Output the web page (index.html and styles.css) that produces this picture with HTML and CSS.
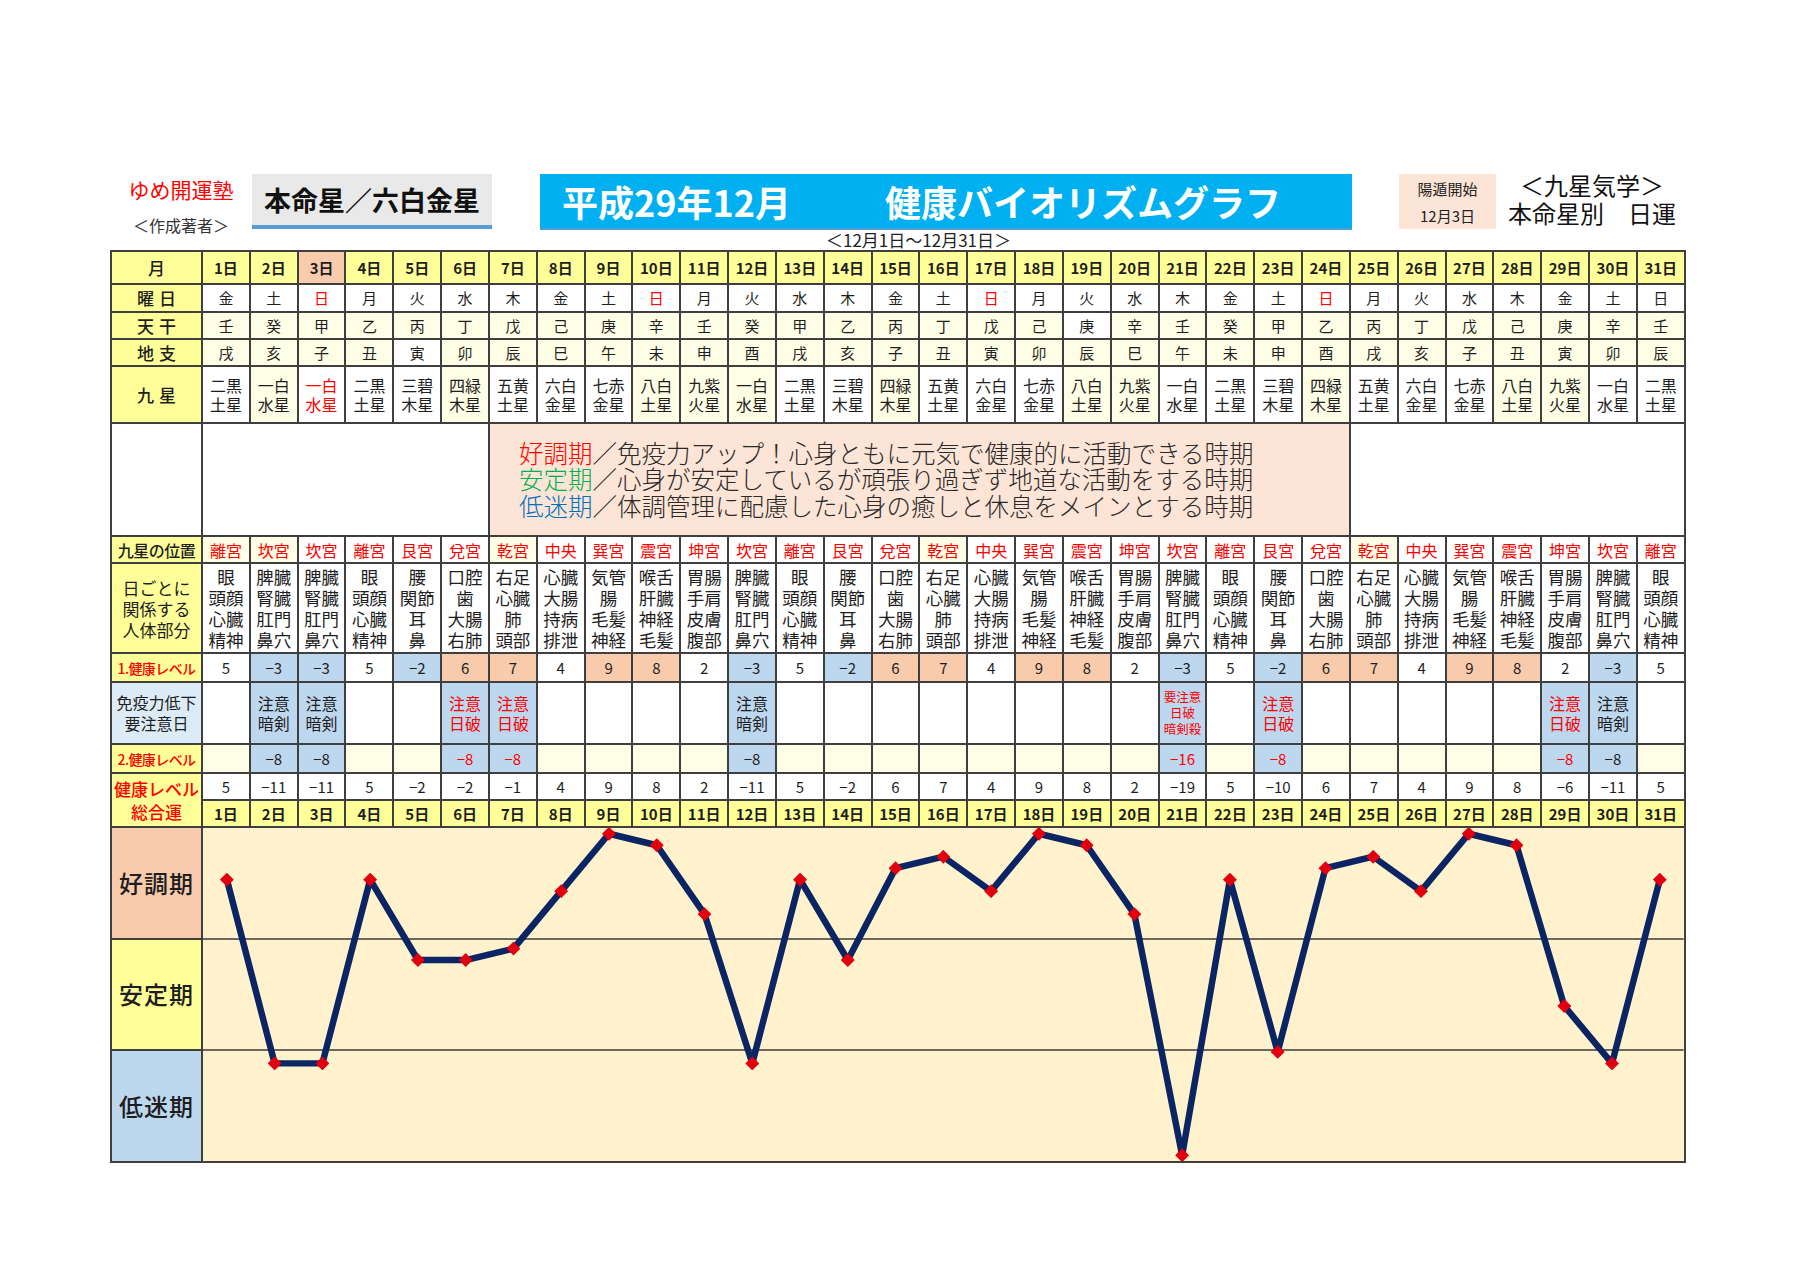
FILE: index.html
```html
<!DOCTYPE html>
<html lang="ja">
<head>
<meta charset="utf-8">
<title>健康バイオリズムグラフ</title>
<link rel="stylesheet" href="styles.css">
</head>
<body>
<div class="page">
  <div class="header">
    <div class="brand">
      <div class="brand-name">ゆめ開運塾</div>
      <div class="brand-sub">＜作成著者＞</div>
    </div>
    <div class="honmei">本命星／六白金星</div>
    <div class="banner"><span>平成29年12月</span><span class="title2">健康バイオリズムグラフ</span></div>
    <div class="start"><span>陽遁開始</span><span>12月3日</span></div>
    <div class="kisei"><span>＜九星気学＞</span><span>本命星別　日運</span></div>
  </div>
  <div class="period">＜12月1日～12月31日＞</div>

  <table class="grid">
    <colgroup>
      <col class="c-lab">
      <col span="31" class="c-day">
    </colgroup>
    <tr class="r-month">
      <th class="lab sp">月</th>
      <td class="day">1日</td><td class="day">2日</td><td class="day pk">3日</td><td class="day">4日</td><td class="day">5日</td><td class="day">6日</td><td class="day">7日</td><td class="day">8日</td><td class="day">9日</td><td class="day">10日</td><td class="day">11日</td><td class="day">12日</td><td class="day">13日</td><td class="day">14日</td><td class="day">15日</td><td class="day">16日</td><td class="day">17日</td><td class="day">18日</td><td class="day">19日</td><td class="day">20日</td><td class="day">21日</td><td class="day">22日</td><td class="day">23日</td><td class="day">24日</td><td class="day">25日</td><td class="day">26日</td><td class="day">27日</td><td class="day">28日</td><td class="day">29日</td><td class="day">30日</td><td class="day">31日</td>
    </tr>
    <tr class="r-small">
      <th class="lab sp">曜日</th>
      <td>金</td><td>土</td><td class="red">日</td><td>月</td><td>火</td><td>水</td><td>木</td><td>金</td><td>土</td><td class="red">日</td><td>月</td><td>火</td><td>水</td><td>木</td><td>金</td><td>土</td><td class="red">日</td><td>月</td><td>火</td><td>水</td><td>木</td><td>金</td><td>土</td><td class="red">日</td><td>月</td><td>火</td><td>水</td><td>木</td><td>金</td><td>土</td><td>日</td>
    </tr>
    <tr class="r-small2">
      <th class="lab sp">天干</th>
      <td class="ly">壬</td><td class="ly">癸</td><td class="ly">甲</td><td class="ly">乙</td><td class="ly">丙</td><td class="ly">丁</td><td class="ly">戊</td><td class="ly">己</td><td class="ly">庚</td><td class="ly">辛</td><td class="ly">壬</td><td class="ly">癸</td><td class="ly">甲</td><td class="ly">乙</td><td class="ly">丙</td><td class="ly">丁</td><td class="ly">戊</td><td class="ly">己</td><td>庚</td><td class="ly">辛</td><td class="ly">壬</td><td class="ly">癸</td><td class="ly">甲</td><td class="ly">乙</td><td class="ly">丙</td><td class="ly">丁</td><td class="ly">戊</td><td class="ly">己</td><td class="ly">庚</td><td class="ly">辛</td><td class="ly">壬</td>
    </tr>
    <tr class="r-small3">
      <th class="lab sp">地支</th>
      <td class="ly">戌</td><td class="ly">亥</td><td class="ly">子</td><td class="ly">丑</td><td>寅</td><td class="ly">卯</td><td class="ly">辰</td><td class="ly">巳</td><td class="ly">午</td><td class="ly">未</td><td class="ly">申</td><td class="ly">酉</td><td class="ly">戌</td><td class="ly">亥</td><td class="ly">子</td><td class="ly">丑</td><td class="ly">寅</td><td class="ly">卯</td><td class="ly">辰</td><td class="ly">巳</td><td class="ly">午</td><td class="ly">未</td><td class="ly">申</td><td class="ly">酉</td><td class="ly">戌</td><td class="ly">亥</td><td class="ly">子</td><td class="ly">丑</td><td class="ly">寅</td><td class="ly">卯</td><td class="ly">辰</td>
    </tr>
    <tr class="r-star">
      <th class="lab sp">九星</th>
      <td>二黒<br>土星</td><td class="ly">一白<br>水星</td><td class="red">一白<br>水星</td><td>二黒<br>土星</td><td>三碧<br>木星</td><td class="ly">四緑<br>木星</td><td>五黄<br>土星</td><td>六白<br>金星</td><td>七赤<br>金星</td><td class="ly">八白<br>土星</td><td class="ly">九紫<br>火星</td><td class="ly">一白<br>水星</td><td>二黒<br>土星</td><td>三碧<br>木星</td><td class="ly">四緑<br>木星</td><td>五黄<br>土星</td><td>六白<br>金星</td><td>七赤<br>金星</td><td class="ly">八白<br>土星</td><td class="ly">九紫<br>火星</td><td>一白<br>水星</td><td>二黒<br>土星</td><td>三碧<br>木星</td><td class="ly">四緑<br>木星</td><td>五黄<br>土星</td><td>六白<br>金星</td><td>七赤<br>金星</td><td class="ly">八白<br>土星</td><td class="ly">九紫<br>火星</td><td>一白<br>水星</td><td>二黒<br>土星</td>
    </tr>
    <tr class="r-legend">
      <th class="lab white"></th>
      <td colspan="6"></td>
      <td colspan="18" class="legend">
        <div class="legend-lines">
          <div><span class="k-good">好調期</span>／免疫力アップ！心身ともに元気で健康的に活動できる時期</div>
          <div><span class="k-stable">安定期</span>／心身が安定しているが頑張り過ぎず地道な活動をする時期</div>
          <div><span class="k-low">低迷期</span>／体調管理に配慮した心身の癒しと休息をメインとする時期</div>
        </div>
      </td>
      <td colspan="7"></td>
    </tr>
    <tr class="r-palace">
      <th class="lab lab-palace">九星の位置</th>
      <td class="ly">離宮</td><td class="ly">坎宮</td><td>坎宮</td><td>離宮</td><td>艮宮</td><td>兌宮</td><td class="ly">乾宮</td><td>中央</td><td>巽宮</td><td>震宮</td><td>坤宮</td><td>坎宮</td><td>離宮</td><td>艮宮</td><td>兌宮</td><td class="ly">乾宮</td><td>中央</td><td>巽宮</td><td>震宮</td><td>坤宮</td><td>坎宮</td><td>離宮</td><td>艮宮</td><td>兌宮</td><td class="ly">乾宮</td><td>中央</td><td>巽宮</td><td>震宮</td><td>坤宮</td><td>坎宮</td><td>離宮</td>
    </tr>
    <tr class="r-body">
      <th class="lab lab-body">日ごとに<br>関係する<br>人体部分</th>
      <td>眼<br>頭顔<br>心臓<br>精神</td>
      <td>脾臓<br>腎臓<br>肛門<br>鼻穴</td>
      <td>脾臓<br>腎臓<br>肛門<br>鼻穴</td>
      <td>眼<br>頭顔<br>心臓<br>精神</td>
      <td>腰<br>関節<br>耳<br>鼻</td>
      <td>口腔<br>歯<br>大腸<br>右肺</td>
      <td>右足<br>心臓<br>肺<br>頭部</td>
      <td>心臓<br>大腸<br>持病<br>排泄</td>
      <td>気管<br>腸<br>毛髪<br>神経</td>
      <td>喉舌<br>肝臓<br>神経<br>毛髪</td>
      <td>胃腸<br>手肩<br>皮膚<br>腹部</td>
      <td>脾臓<br>腎臓<br>肛門<br>鼻穴</td>
      <td>眼<br>頭顔<br>心臓<br>精神</td>
      <td>腰<br>関節<br>耳<br>鼻</td>
      <td>口腔<br>歯<br>大腸<br>右肺</td>
      <td>右足<br>心臓<br>肺<br>頭部</td>
      <td>心臓<br>大腸<br>持病<br>排泄</td>
      <td>気管<br>腸<br>毛髪<br>神経</td>
      <td>喉舌<br>肝臓<br>神経<br>毛髪</td>
      <td>胃腸<br>手肩<br>皮膚<br>腹部</td>
      <td>脾臓<br>腎臓<br>肛門<br>鼻穴</td>
      <td>眼<br>頭顔<br>心臓<br>精神</td>
      <td>腰<br>関節<br>耳<br>鼻</td>
      <td>口腔<br>歯<br>大腸<br>右肺</td>
      <td>右足<br>心臓<br>肺<br>頭部</td>
      <td>心臓<br>大腸<br>持病<br>排泄</td>
      <td>気管<br>腸<br>毛髪<br>神経</td>
      <td>喉舌<br>肝臓<br>神経<br>毛髪</td>
      <td>胃腸<br>手肩<br>皮膚<br>腹部</td>
      <td>脾臓<br>腎臓<br>肛門<br>鼻穴</td>
      <td>眼<br>頭顔<br>心臓<br>精神</td>
    </tr>
    <tr class="r-level">
      <th class="lab lab-level">1.健康レベル</th>
      <td>5</td><td class="bl">−3</td><td class="bl">−3</td><td>5</td><td class="bl">−2</td><td class="pk">6</td><td class="pk">7</td><td>4</td><td class="pk">9</td><td class="pk">8</td><td>2</td><td class="bl">−3</td><td>5</td><td class="bl">−2</td><td class="pk">6</td><td class="pk">7</td><td>4</td><td class="pk">9</td><td class="pk">8</td><td>2</td><td class="bl">−3</td><td>5</td><td class="bl">−2</td><td class="pk">6</td><td class="pk">7</td><td>4</td><td class="pk">9</td><td class="pk">8</td><td>2</td><td class="bl">−3</td><td>5</td>
    </tr>
    <tr class="r-caution">
      <th class="lab lab-caution">免疫力低下<br>要注意日</th>
      <td></td><td class="bl">注意<br>暗剣</td><td class="bl">注意<br>暗剣</td><td></td><td></td><td class="bl red">注意<br>日破</td><td class="bl red">注意<br>日破</td><td></td><td></td><td></td><td></td><td class="bl">注意<br>暗剣</td><td></td><td></td><td></td><td></td><td></td><td></td><td></td><td></td><td class="bl red tiny">要注意<br>日破<br>暗剣殺</td><td></td><td class="bl red">注意<br>日破</td><td></td><td></td><td></td><td></td><td></td><td class="bl red">注意<br>日破</td><td class="bl">注意<br>暗剣</td><td></td>
    </tr>
    <tr class="r-level">
      <th class="lab lab-level">2.健康レベル</th>
      <td class="ly"></td><td class="bl">−8</td><td class="bl">−8</td><td class="ly"></td><td class="ly"></td><td class="bl red">−8</td><td class="bl red">−8</td><td class="ly"></td><td class="ly"></td><td class="ly"></td><td class="ly"></td><td class="bl">−8</td><td class="ly"></td><td class="ly"></td><td class="ly"></td><td class="ly"></td><td class="ly"></td><td class="ly"></td><td class="ly"></td><td class="ly"></td><td class="bl red">−16</td><td class="ly"></td><td class="bl red">−8</td><td class="ly"></td><td class="ly"></td><td class="ly"></td><td class="ly"></td><td class="ly"></td><td class="bl red">−8</td><td class="bl">−8</td><td class="ly"></td>
    </tr>
    <tr class="r-total">
      <th class="lab lab-total" rowspan="2">健康レベル<br>総合運</th>
      <td>5</td><td>−11</td><td>−11</td><td>5</td><td>−2</td><td>−2</td><td>−1</td><td>4</td><td>9</td><td>8</td><td>2</td><td>−11</td><td>5</td><td>−2</td><td>6</td><td>7</td><td>4</td><td>9</td><td>8</td><td>2</td><td>−19</td><td>5</td><td>−10</td><td>6</td><td>7</td><td>4</td><td>9</td><td>8</td><td>−6</td><td>−11</td><td>5</td>
    </tr>
    <tr class="r-days">
      <td class="day">1日</td><td class="day">2日</td><td class="day">3日</td><td class="day">4日</td><td class="day">5日</td><td class="day">6日</td><td class="day">7日</td><td class="day">8日</td><td class="day">9日</td><td class="day">10日</td><td class="day">11日</td><td class="day">12日</td><td class="day">13日</td><td class="day">14日</td><td class="day">15日</td><td class="day">16日</td><td class="day">17日</td><td class="day">18日</td><td class="day">19日</td><td class="day">20日</td><td class="day">21日</td><td class="day">22日</td><td class="day">23日</td><td class="day">24日</td><td class="day">25日</td><td class="day">26日</td><td class="day">27日</td><td class="day">28日</td><td class="day">29日</td><td class="day">30日</td><td class="day">31日</td>
    </tr>
    <tr class="r-band">
      <th class="lab band band-good">好調期</th>
      <td colspan="31" rowspan="3" class="chart">
        <svg class="chart-svg" viewBox="0 0 1488 336" preserveAspectRatio="none">
          <defs>
            <marker id="dia" markerWidth="14" markerHeight="14" refX="7" refY="7" markerUnits="userSpaceOnUse">
              <path d="M7 0 L14 7 L7 14 L0 7 Z" fill="#e0000f"/>
            </marker>
          </defs>
          <line x1="0" y1="112" x2="1488" y2="112" stroke="#3a3a3a" stroke-width="1.6"/>
          <line x1="0" y1="224" x2="1488" y2="224" stroke="#3a3a3a" stroke-width="1.6"/>
          <polyline fill="none" stroke="#0b2463" stroke-width="6.5" stroke-linejoin="round"
            marker-start="url(#dia)" marker-mid="url(#dia)" marker-end="url(#dia)"
            points="24,52.1 72,237.5 120,237.5 168,52.1 216,133.2 264,133.2 312,121.7 360,63.7 408,5.8 456,17.4 504,86.9 552,237.5 600,52.1 648,133.2 696,40.6 744,29 792,63.7 840,5.8 888,17.4 936,86.9 984,330.2 1032,52.1 1080,225.9 1128,40.6 1176,29 1224,63.7 1272,5.8 1320,17.4 1368,179.6 1416,237.5 1464,52.1"/>
        </svg>
      </td>
    </tr>
    <tr class="r-band">
      <th class="lab band band-stable">安定期</th>
    </tr>
    <tr class="r-band">
      <th class="lab band band-low">低迷期</th>
    </tr>
  </table>
</div>
</body>
</html>
```

FILE: styles.css
```css
* { box-sizing: border-box; }

html, body {
  margin: 0;
  background: #ffffff;
}

body {
  font-family: "Noto Sans CJK JP", "Noto Sans", sans-serif;
  color: #1e1e1e;
}

.page {
  width: 1800px;
  height: 1273px;
  padding: 174px 0 0 110px;
}

/* ---------- header ---------- */
.header {
  display: flex;
  align-items: flex-start;
  height: 56px;
}

.brand {
  width: 142px;
  display: flex;
  flex-direction: column;
  align-items: center;
  padding-top: 3px;
}

.brand-name {
  color: #ff0000;
  font-size: 21px;
  line-height: 25px;
}

.brand-sub {
  margin-top: 13px;
  font-size: 16px;
  line-height: 20px;
  color: #333;
}

.honmei {
  width: 240px;
  height: 55px;
  background: #e9e9e9;
  border-bottom: 4px solid #5b9bd5;
  display: flex;
  align-items: center;
  justify-content: center;
  font-size: 27px;
  font-weight: 700;
  color: #111;
}

.banner {
  margin-left: 48px;
  width: 812px;
  height: 56px;
  background: #00b0f0;
  border-bottom: 2px solid #4f9fd6;
  color: #ffffff;
  font-size: 36px;
  font-weight: 700;
  display: flex;
  align-items: center;
  padding-left: 22px;
  white-space: nowrap;
}

.banner .title2 {
  margin-left: 94px;
}

.start {
  margin-left: 47px;
  width: 97px;
  height: 55px;
  background: #fce4d6;
  display: flex;
  flex-direction: column;
  align-items: center;
  justify-content: center;
  font-size: 15px;
  line-height: 27px;
  color: #222;
}

.kisei {
  margin-left: 10px;
  width: 172px;
  margin-top: -3px;
  display: flex;
  flex-direction: column;
  align-items: center;
  font-size: 24px;
  line-height: 28px;
  color: #111;
  white-space: nowrap;
}

.period {
  height: 20px;
  padding-left: 716px;
  font-size: 17px;
  line-height: 20px;
  color: #222;
}

/* ---------- table ---------- */
.grid {
  border-collapse: collapse;
  table-layout: fixed;
  width: 1574px;
  border: 2px solid #222;
}

.c-lab { width: 91px; }
.c-day { width: 47.84px; }

.grid th,
.grid td {
  border: 2px solid #3f3f3f;
  padding: 0;
  text-align: center;
  vertical-align: middle;
  font-size: 15px;
  line-height: 18px;
  background: #ffffff;
  font-weight: 400;
  overflow: hidden;
}

.grid .lab {
  background: #ffff99;
  font-weight: 500;
  font-size: 17px;
  color: #1e1e1e;
}

.grid .lab.sp { letter-spacing: 5px; text-indent: 5px; }
.grid .lab.white { background: #ffffff; }

.grid .lab-palace { font-size: 16px; letter-spacing: -0.5px; }
.grid .lab-body { font-size: 17px; line-height: 21px; font-weight: 400; }
.grid .lab-level { font-size: 14px; color: #ff0000; letter-spacing: -0.6px; }
.grid .lab-caution { background: #ddebf7; font-size: 16px; line-height: 21px; font-weight: 400; }
.grid .lab-total { color: #ff0000; font-size: 17px; line-height: 23px; }

.grid .day {
  background: #ffff99;
  font-weight: 700;
  font-size: 15px;
}

.grid .ly { background: #fefde6; }
.grid .pk { background: #f8cbad; }
.grid .bl { background: #bdd7ee; }
.grid .red { color: #ff0000; }

.r-month { height: 33px; }
.r-small { height: 28px; }
.r-small2 { height: 27px; }
.r-small3 { height: 27px; }
.r-star { height: 57px; }
.r-star td { font-size: 16px; line-height: 19px; }
.r-legend { height: 113px; }
.r-palace { height: 27px; }
.r-palace td { color: #ff0000; font-size: 16px; }
.r-body { height: 90px; }
.r-body td { font-size: 17.5px; line-height: 21px; }
.r-level { height: 29px; }
.r-caution { height: 62px; }
.r-caution td { font-size: 16px; line-height: 20px; }
.r-caution td.tiny { font-size: 12.5px; line-height: 16px; }
.r-total { height: 27px; }
.r-days { height: 27px; }
.r-band { height: 111px; }

.grid td.legend {
  background: #fce4d6;
  text-align: left;
  padding-left: 29px;
}

.legend-lines {
  font-size: 24.5px;
  line-height: 26.5px;
  font-weight: 300;
  color: #2a2a2a;
  white-space: nowrap;
}

.k-good { color: #ff0000; }
.k-stable { color: #00b050; }
.k-low { color: #0070c0; }

.grid .band {
  font-size: 24px;
  font-weight: 500;
  letter-spacing: 1px;
}

.grid .band-good { background: #f8cbad; }
.grid .band-stable { background: #ffff99; }
.grid .band-low { background: #bdd7ee; }

.grid td.chart {
  background: #fff2cc;
  padding: 0;
  vertical-align: top;
}

.chart-svg {
  display: block;
  width: 100%;
  height: 333px;
}
```
